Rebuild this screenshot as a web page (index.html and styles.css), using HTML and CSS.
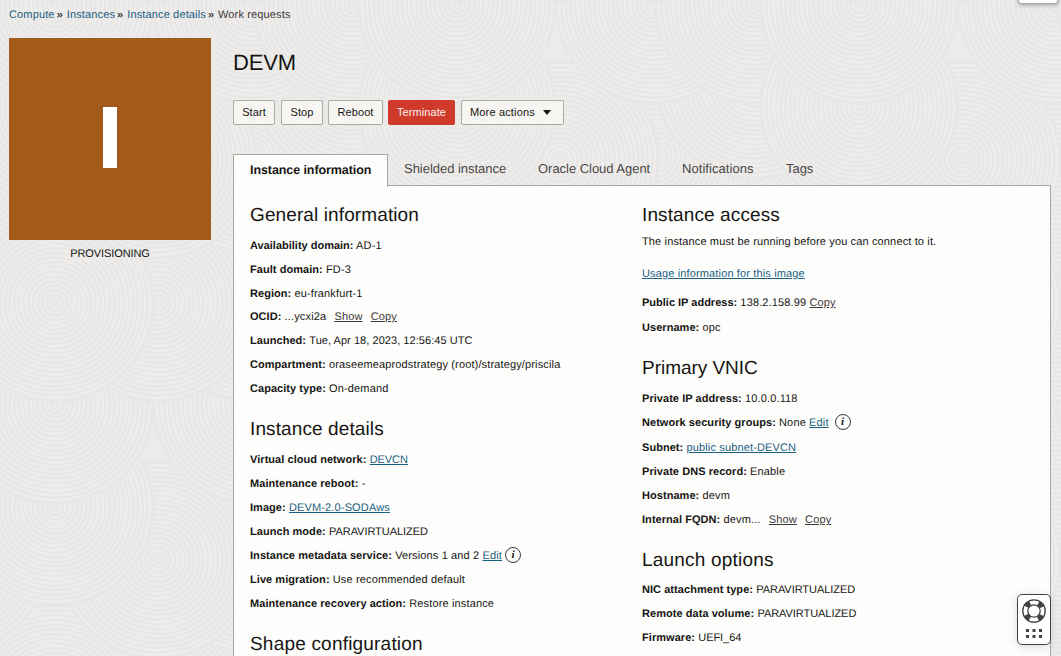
FILE: index.html
```html
<!DOCTYPE html>
<html lang="en">
<head>
<meta charset="utf-8">
<title>DEVM - Instance details</title>
<link rel="stylesheet" href="styles.css">
</head>
<body>
<svg class="backdrop" width="1061" height="656" aria-hidden="true">
  <defs>
    <radialGradient id="rings" gradientUnits="userSpaceOnUse" cx="0" cy="0" r="4.7" spreadMethod="repeat">
      <stop offset="0" stop-color="#edeceb"/><stop offset=".3" stop-color="#eeedec"/>
      <stop offset=".7" stop-color="#e6e5e4"/><stop offset="1" stop-color="#edeceb"/>
    </radialGradient>
    <circle id="disc" r="99" fill="url(#rings)" stroke="#e7e6e5"/>
    <g id="cluster">
      <use href="#disc" x="352" y="555"/><use href="#disc" x="252" y="555"/><use href="#disc" x="158" y="560"/>
      <use href="#disc" x="352" y="480"/><use href="#disc" x="55" y="507"/>
      <use href="#disc" x="55" y="405"/><use href="#disc" x="252" y="405"/><use href="#disc" x="352" y="405"/>
      <use href="#disc" x="252" y="303"/><use href="#disc" x="352" y="290"/>
      <use href="#disc" x="158" y="303"/><use href="#disc" x="55" y="303"/>
    </g>
    <g id="band">
      <use href="#cluster" x="-402"/><use href="#cluster"/>
      <use href="#cluster" x="402"/><use href="#cluster" x="804"/>
    </g>
  </defs>
  <use href="#band" y="400"/>
  <use href="#band"/>
  <use href="#band" y="-400"/>
</svg>

<nav class="crumbs">
  <a>Compute</a><i>»</i><a>Instances</a><i>»</i><a>Instance details</a><i>»</i><span>Work requests</span>
</nav>

<div class="page">
  <aside class="status">
    <div class="tile"><svg width="16" height="61"><rect width="14" height="61" x="1" fill="#fff"/></svg></div>
    <p>PROVISIONING</p>
  </aside>

  <main class="main">
    <h1>DEVM</h1>
    <div class="actions">
      <button class="btn start">Start</button>
      <button class="btn stop">Stop</button>
      <button class="btn reboot">Reboot</button>
      <button class="btn danger">Terminate</button>
      <button class="btn more">More actions <svg width="8" height="5"><path d="M0 0h8L4 5z" fill="#161513"/></svg></button>
    </div>
    <div class="tabs">
      <div class="tab active">Instance information</div>
      <div class="tab t2">Shielded instance</div>
      <div class="tab t3">Oracle Cloud Agent</div>
      <div class="tab t4">Notifications</div>
      <div class="tab t5">Tags</div>
    </div>
    <div class="panel">
      <div class="col">
        <h2>General information</h2>
        <div class="row"><b class="tight">Availability domain:</b> AD-1</div>
        <div class="row"><b>Fault domain:</b> FD-3</div>
        <div class="row short"><b>Region:</b> eu-frankfurt-1</div>
        <div class="row"><b>OCID:</b> ...ycxi2a <a class="plain">Show</a> <a class="plain">Copy</a></div>
        <div class="row"><b>Launched:</b> <span class="date">Tue, Apr 18, 2023, 12:56:45 UTC</span></div>
        <div class="row"><b>Compartment:</b> oraseemeaprodstrategy (root)/strategy/priscila</div>
        <div class="row"><b>Capacity type:</b> On-demand</div>
        <h2>Instance details</h2>
        <div class="row"><b>Virtual cloud network:</b> <a class="caps">DEVCN</a></div>
        <div class="row"><b>Maintenance reboot:</b> -</div>
        <div class="row"><b>Image:</b> <a>DEVM-2.0-SODAws</a></div>
        <div class="row"><b>Launch mode:</b> <span class="caps">PARAVIRTUALIZED</span></div>
        <div class="row"><b>Instance metadata service:</b> Versions 1 and 2 <a>Edit</a><span class="info">i</span></div>
        <div class="row"><b>Live migration:</b> Use recommended default</div>
        <div class="row"><b>Maintenance recovery action:</b> Restore instance</div>
        <h2 class="loose">Shape configuration</h2>
      </div>
      <div class="col">
        <h2 class="access">Instance access</h2>
        <div class="row">The instance must be running before you can connect to it.</div>
        <div class="row usage"><a>Usage information for this image</a></div>
        <div class="row tall"><b class="tight">Public IP address:</b> 138.2.158.99 <a class="plain near">Copy</a></div>
        <div class="row"><b>Username:</b> opc</div>
        <h2 class="vnic">Primary VNIC</h2>
        <div class="row"><b>Private IP address:</b> 10.0.0.118</div>
        <div class="row tall"><b>Network security groups:</b> None <a>Edit</a><span class="info wide">i</span></div>
        <div class="row"><b>Subnet:</b> <a>public subnet-DEVCN</a></div>
        <div class="row"><b>Private DNS record:</b> Enable</div>
        <div class="row"><b>Hostname:</b> devm</div>
        <div class="row"><b>Internal FQDN:</b> devm... <a class="plain">Show</a> <a class="plain">Copy</a></div>
        <h2 class="launch loose">Launch options</h2>
        <div class="row"><b>NIC attachment type:</b> <span class="caps">PARAVIRTUALIZED</span></div>
        <div class="row"><b>Remote data volume:</b> <span class="caps">PARAVIRTUALIZED</span></div>
        <div class="row"><b>Firmware:</b> <span class="caps">UEFI_64</span></div>
      </div>
    </div>
  </main>
</div>

<div class="corner"></div>
<div class="help">
  <svg width="24" height="24" viewBox="0 0 24 24" fill="none" stroke="#45413f">
    <circle cx="12" cy="12" r="11.2" stroke-width="1.3"/>
    <circle cx="12" cy="12" r="6.2" stroke-width="1.3"/>
    <circle cx="12" cy="12" r="8.7" stroke-width="5" stroke-dasharray="5.2 8.466" stroke-dashoffset="-4.23"/>
  </svg>
  <svg class="dots" width="16" height="9" fill="#45413f">
    <path d="M0 0h3v3H0zM6.5 0h3v3h-3zM13 0h3v3h-3zM0 6h3v3H0zM6.5 6h3v3h-3zM13 6h3v3h-3z"/>
  </svg>
</div>
</body>
</html>
```
FILE: styles.css
```css
* { box-sizing: border-box; }
html { overflow: hidden; }
body {
  margin: 0;
  width: 1061px;
  height: 656px;
  overflow: hidden;
  position: relative;
  background: #ecebea;
  color: #161513;
  font: 11px/24px "Liberation Sans", Arial, sans-serif;
  text-rendering: geometricPrecision;
}
.backdrop { position: absolute; left: 0; top: 0; z-index: -1; }
a { color: #1b5f83; }
.crumbs { display: flex; height: 38px; padding: 3px 0 0 9px; color: #3b3937; letter-spacing: .14px; }
.crumbs i { font-style: normal; padding: 0 4px 0 2px; font-weight: bold; font-size: 11px; letter-spacing: 0; }
.page { display: flex; padding-left: 9px; gap: 22px; }
.status { width: 202px; text-align: center; }
.status p { margin: 2px 0 0; letter-spacing: -.08px; }
.tile { height: 202px; background: #a25b1a; display: flex; align-items: center; justify-content: center; padding-bottom: 3px; }
.tile svg { display: block; }
.main { width: 818px; }
h1 { margin: 0; font-size: 22px; font-weight: normal; line-height: 49px; height: 62px; letter-spacing: -.2px; }
.actions { display: flex; height: 54px; }
.btn {
  height: 25px; padding: 0 0 1px; margin: 0 6px 0 0;
  border: 1px solid #aeaaa4; border-radius: 2px;
  background: #f6f5f2; color: #161513;
  font: 11px "Liberation Sans", Arial, sans-serif;
  letter-spacing: .08px;
}
.start, .stop { width: 42px; }
.stop { margin-right: 5px; }
.reboot { width: 55px; margin-right: 5px; }
.danger { width: 67px; background: #d03a2a; border-color: #d03a2a; color: #fdf3f1; }
.more { width: 103px; display: flex; align-items: center; padding-left: 8px; gap: 8px; letter-spacing: .16px; }
.tabs { display: flex; height: 32px; font-size: 13px; line-height: 29px; color: #4a4745; }
.tab { padding-left: 16px; white-space: nowrap; letter-spacing: -.03px; }
.active {
  width: 155px; height: 33px; line-height: 30px; font-size: 12.5px; letter-spacing: -.08px;
  position: relative; z-index: 1;
  border: 1px solid #aaa6a1; border-bottom: 0;
  background: #fdfdfb; color: #161513; font-weight: bold;
}
.t2 { width: 134px; }
.t3 { width: 144px; }
.t4 { width: 104px; letter-spacing: .06px; }
.panel {
  display: flex; height: 500px; padding-left: 16px;
  margin-top: -1px; border: 1px solid #aaa6a1; background: #fdfdfb;
}
.col { width: 392px; }
h2 { margin: 0; height: 47px; padding-top: 11px; font-size: 19px; line-height: 38px; font-weight: normal; letter-spacing: .11px; }
.loose { letter-spacing: .2px; }
.vnic { letter-spacing: -.03px; }
.row { height: 24px; padding-top: 1px; white-space: nowrap; letter-spacing: .14px; }
.row b { letter-spacing: .05px; }
.row .tight { letter-spacing: 0; }
.row .caps { letter-spacing: -.05px; }
.row .date { letter-spacing: .05px; }
.short { height: 23px; }
.tall { height: 25px; }
.row a { text-decoration: underline; text-underline-offset: 1px; }
.row .plain { color: #3b3937; margin-left: 5px; }
.row .near { margin-left: 0; }
.access { height: 43px; }
.usage { margin: 8px 0 5px; }
.launch { height: 46px; }
.info {
  display: inline-block; width: 16px; height: 16px; margin: -2px 0 0 3px;
  border: 1px solid #3b3937; border-radius: 50%;
  font: italic bold 11px/14px "Liberation Serif", serif; text-align: center; vertical-align: middle;
}
.wide { margin-left: 6px; }
.corner {
  position: absolute; left: 1018px; top: -20px; width: 40px; height: 24px;
  background: #fff; border: 1px solid #aaa6a4; border-radius: 3px; box-shadow: 0 1px 4px #0005;
}
.help {
  position: absolute; left: 1017px; top: 594px; width: 34px; height: 51px;
  display: flex; flex-direction: column; align-items: center; gap: 6px; padding-top: 4px;
  background: #fff; border: 1px solid #45413f; border-radius: 5px; box-shadow: 0 2px 10px #0002;
}
.help svg { display: block; flex: none; }
```
